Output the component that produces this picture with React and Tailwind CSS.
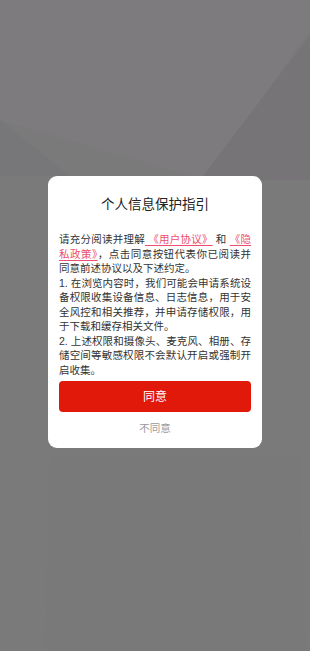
import React from 'react'

const FONT = "font-['Liberation_Sans','Noto_Sans_CJK_SC',sans-serif]"

function Backdrop() {
  // faint shapes of the page behind the dimmed overlay
  return (
    <svg className="absolute inset-0 h-full w-full" viewBox="0 0 310 651" preserveAspectRatio="none">
      <rect width="310" height="651" fill="#7b7a7b" />
      <path d="M0 0 H310 V30 L205 180 L0 120 Z" fill="#7d7b7d" />
      <path d="M310 35 L200 180 L310 180 Z" fill="#767477" />
      <path d="M0 120 L70 176 L0 176 Z" fill="#777678" />
      <path d="M50 455 L300 455 L305 651 L45 651 Z" fill="#7a797a" />
    </svg>
  )
}

function Link({ children }) {
  return <span className="text-[#ec4f6d] underline decoration-[#ec4f6d] underline-offset-2">{children}</span>
}

export default function App() {
  return (
    <div className={`relative h-[651px] w-[310px] overflow-hidden ${FONT}`}>
      <Backdrop />
      <div className="relative flex justify-center pt-[176px]">
        <div className="flex w-[214px] flex-col rounded-[9px] bg-white px-[11px] pt-[19px] pb-[12px]">
          <h2 className="text-center text-[13.5px] leading-[20px] text-[#222]">个人信息保护指引</h2>

          <div className="mt-[17px] text-justify text-[10.5px] leading-[14.5px] text-[#333]">
            <p>
              请充分阅读并理解<Link> 《用户协议》</Link> 和 <Link> 《隐私政策》</Link>，点击同意按钮代表你已阅读并同意前述协议以及下述约定。
            </p>
            <p>1. 在浏览内容时，我们可能会申请系统设备权限收集设备信息、日志信息，用于安全风控和相关推荐，并申请存储权限，用于下载和缓存相关文件。</p>
            <p>2. 上述权限和摄像头、麦克风、相册、存储空间等敏感权限不会默认开启或强制开启收集。</p>
          </div>

          <button className="mt-[4px] h-[31px] w-full rounded-[4px] bg-[#e0190b] text-[12px] text-white">同意</button>
          <button className="mt-[9px] text-center text-[10.5px] leading-[15px] text-[#999]">不同意</button>
        </div>
      </div>
    </div>
  )
}
